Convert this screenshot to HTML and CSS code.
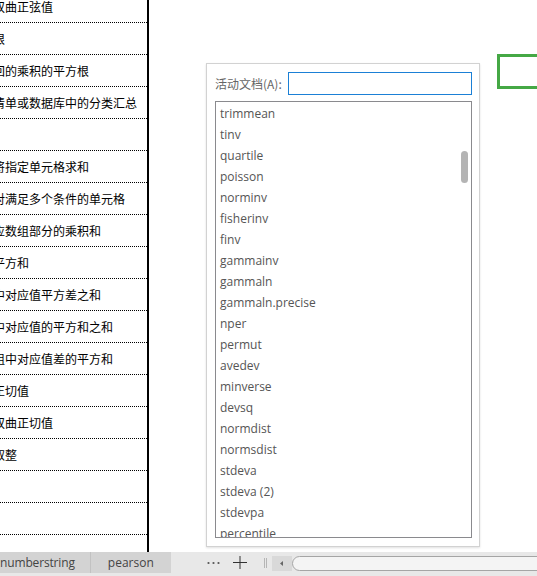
FILE: index.html
```html
<!DOCTYPE html>
<html lang="zh-CN">
<head>
<meta charset="utf-8">
<title>工作表</title>
<link rel="stylesheet" href="styles.css">
</head>
<body>
<div class="app">
  <div class="main">
    <div class="sheet">
      <div class="rows">
        <div class="row">双曲正弦值</div>
        <div class="row">根</div>
        <div class="row">回的乘积的平方根</div>
        <div class="row">清单或数据库中的分类汇总</div>
        <div class="row"></div>
        <div class="row">将指定单元格求和</div>
        <div class="row">对满足多个条件的单元格</div>
        <div class="row">应数组部分的乘积和</div>
        <div class="row">平方和</div>
        <div class="row">中对应值平方差之和</div>
        <div class="row">中对应值的平方和之和</div>
        <div class="row">组中对应值差的平方和</div>
        <div class="row">正切值</div>
        <div class="row">双曲正切值</div>
        <div class="row">取整</div>
        <div class="row"></div>
        <div class="row"></div>
        <div class="row"></div>
      </div>
    </div>
    <div class="divider"></div>
    <div class="canvas">
      <div class="selection"></div>
      <div class="dialog">
        <div class="field">
          <label class="label" for="doc">活动文档(A):</label>
          <input class="input" id="doc" type="text">
        </div>
        <div class="list">
          <div class="item">trimmean</div>
          <div class="item">tinv</div>
          <div class="item">quartile</div>
          <div class="item">poisson</div>
          <div class="item">norminv</div>
          <div class="item">fisherinv</div>
          <div class="item">finv</div>
          <div class="item">gammainv</div>
          <div class="item">gammaln</div>
          <div class="item">gammaln.precise</div>
          <div class="item">nper</div>
          <div class="item">permut</div>
          <div class="item">avedev</div>
          <div class="item">minverse</div>
          <div class="item">devsq</div>
          <div class="item">normdist</div>
          <div class="item">normsdist</div>
          <div class="item">stdeva</div>
          <div class="item">stdeva (2)</div>
          <div class="item">stdevpa</div>
          <div class="item">percentile</div>
          <div class="item">percentrank</div>
          <div class="thumb"></div>
        </div>
      </div>
    </div>
  </div>
  <div class="tabbar">
    <div class="tabs">
      <div class="tab tab-first">numberstring</div>
      <div class="tab tab-last">pearson</div>
    </div>
    <svg class="icon dots" width="13" height="21" viewBox="0 0 13 21">
      <circle cx="1.5" cy="11" r="1.1" fill="#555"/>
      <circle cx="6.5" cy="11" r="1.1" fill="#555"/>
      <circle cx="11.5" cy="11" r="1.1" fill="#555"/>
    </svg>
    <svg class="icon plus" width="14" height="21" viewBox="0 0 14 21">
      <line x1="0" y1="10.5" x2="14" y2="10.5" stroke="#333" stroke-width="1"/>
      <line x1="7" y1="4" x2="7" y2="17" stroke="#333" stroke-width="1"/>
    </svg>
    <svg class="icon grip" width="4" height="21" viewBox="0 0 4 21">
      <line x1="0.5" y1="6" x2="0.5" y2="16" stroke="#b5b5b5" stroke-width="1"/>
      <line x1="2.5" y1="6" x2="2.5" y2="16" stroke="#b5b5b5" stroke-width="1"/>
    </svg>
    <div class="arrowbtn">
      <svg width="20" height="15" viewBox="0 0 20 15">
        <polygon points="8,7.5 11,5 11,10" fill="#666"/>
      </svg>
    </div>
    <div class="track"></div>
  </div>
</div>
</body>
</html>
```
FILE: styles.css
```css
html, body {
  margin: 0;
  padding: 0;
  background: #ffffff;
}

.app {
  width: 537px;
  height: 576px;
  overflow: hidden;
  display: flex;
  flex-direction: column;
  font-family: "Noto Sans", "Noto Sans CJK SC", sans-serif;
}

.main {
  display: flex;
  height: 552px;
  flex: none;
}

.sheet {
  width: 147px;
  flex: none;
  overflow: hidden;
  background: #ffffff;
}

.rows {
  margin-top: -9px;
  margin-left: -7px;
}

.row {
  height: 31px;
  line-height: 32px;
  border-bottom: 1px dotted #000000;
  font-family: "Noto Sans CJK SC", sans-serif;
  font-size: 12px;
  color: #000000;
  white-space: nowrap;
  width: 154px;
  overflow: hidden;
}

.divider {
  width: 2px;
  flex: none;
  background: #000000;
}

.canvas {
  flex: 1;
  position: relative;
  overflow: hidden;
  background: #ffffff;
  padding: 63px 0 0 57px;
}

.selection {
  position: absolute;
  left: 348px;
  top: 54px;
  width: 80px;
  height: 35px;
  box-sizing: border-box;
  border: 3px solid #45a845;
}

.dialog {
  width: 274px;
  height: 484px;
  box-sizing: border-box;
  border: 1px solid #d2d2d2;
  box-shadow: 0 1px 2px rgba(0, 0, 0, 0.12);
  background: #ffffff;
  padding: 8px 7px 8px 8px;
  display: flex;
  flex-direction: column;
}

.field {
  display: flex;
  align-items: center;
  height: 23px;
}

.label {
  font-family: "Noto Sans CJK SC", sans-serif;
  font-size: 12px;
  color: #666666;
  width: 73px;
  flex: none;
  white-space: nowrap;
}

.input {
  flex: 1 1 0;
  min-width: 0;
  width: 0;
  height: 23px;
  box-sizing: border-box;
  margin: 0;
  padding: 0 4px;
  border: 1px solid #1b80d6;
  outline: none;
  background: #ffffff;
}

.list {
  position: relative;
  margin-top: 6px;
  height: 437px;
  box-sizing: border-box;
  border: 1px solid #8a8a8e;
  overflow: hidden;
  padding: 1px 0 0 4px;
}

.item {
  height: 21px;
  line-height: 21px;
  font-family: "Open Sans", sans-serif;
  font-size: 12px;
  color: #555555;
  white-space: nowrap;
}

.thumb {
  position: absolute;
  right: 3px;
  top: 49px;
  width: 7px;
  height: 32px;
  border-radius: 4px;
  background: #b4b4b4;
}

.tabbar {
  height: 24px;
  flex: none;
  display: flex;
  align-items: flex-start;
  background: #e8e8e8;
}

.tabs {
  display: flex;
  margin-left: -16px;
  height: 21px;
}

.tab {
  height: 21px;
  line-height: 21px;
  background: #d3d3d3;
  font-family: "Open Sans", sans-serif;
  font-size: 12px;
  color: #444444;
  white-space: nowrap;
}

.tab-first {
  padding: 0 15px 0 16px;
  letter-spacing: -0.15px;
  border-right: 1px solid #c2c2c2;
}

.tab-last {
  padding: 0 17px 0 17px;
}

.icon {
  flex: none;
  display: block;
}

.dots {
  margin-left: 36px;
}

.plus {
  margin-left: 13px;
}

.grip {
  margin-left: 17px;
}

.arrowbtn {
  margin-left: 4px;
  margin-top: 4px;
  width: 20px;
  height: 15px;
  background: #d9d9d9;
  flex: none;
}

.arrowbtn svg {
  display: block;
}

.track {
  margin-top: 4px;
  width: 300px;
  height: 15px;
  box-sizing: border-box;
  border: 1px solid #a5a5a5;
  border-radius: 8px;
  background: #f4f4f4;
  flex: none;
}
```
